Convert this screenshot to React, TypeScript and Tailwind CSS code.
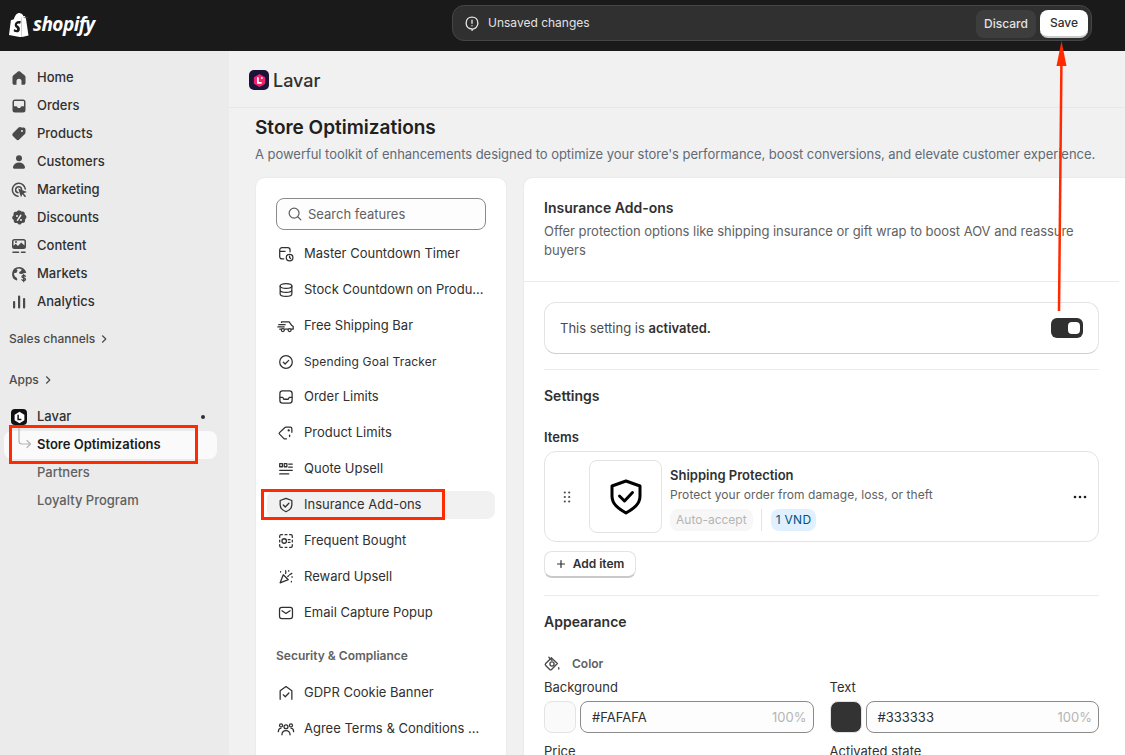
import React from "react";

const Svg = ({ children, className = "w-5 h-5" }: { children: React.ReactNode; className?: string }) => (
  <svg viewBox="0 0 20 20" className={className} fill="none" stroke="currentColor" strokeWidth="1.5" strokeLinecap="round" strokeLinejoin="round">
    {children}
  </svg>
);

const HomeIcon = () => (
  <Svg>
    <path stroke="none" fill="currentColor" d="M10 3.2c-.4 0-.7.1-1 .4L4.2 7.4c-.5.4-.7.9-.7 1.5V15c0 1 .8 1.8 1.8 1.8h2.2v-3.6a2.5 2.5 0 0 1 5 0v3.6h2.2c1 0 1.8-.8 1.8-1.8V8.9c0-.6-.2-1.1-.7-1.5L11 3.6c-.3-.3-.6-.4-1-.4Z" />
  </Svg>
);
const OrdersIcon = () => (
  <Svg>
    <path stroke="none" fill="currentColor" fillRule="evenodd" d="M6 3.5h8A2.5 2.5 0 0 1 16.5 6v8a2.5 2.5 0 0 1-2.5 2.5H6A2.5 2.5 0 0 1 3.5 14V6A2.5 2.5 0 0 1 6 3.5ZM5 10.2V6c0-.6.4-1 1-1h8c.6 0 1 .4 1 1v4.2h-2.2c-.5 0-.9.3-1.1.7l-.2.5c-.1.3-.4.5-.7.5H9.2c-.3 0-.6-.2-.7-.5l-.2-.5c-.2-.4-.6-.7-1.1-.7H5Z" />
  </Svg>
);
const ProductsIcon = () => (
  <Svg>
    <path stroke="none" fill="currentColor" fillRule="evenodd" d="M11.5 3.5h3A2 2 0 0 1 16.5 5.5v3c0 .5-.2 1-.6 1.4l-5.7 5.7c-.8.8-2 .8-2.8 0l-3.5-3.5c-.8-.8-.8-2 0-2.8l5.7-5.7c.4-.4.9-.6 1.4-.6h1ZM13 8a1 1 0 1 0 0-2 1 1 0 0 0 0 2Z" />
  </Svg>
);
const CustomersIcon = () => (
  <Svg>
    <circle cx="10" cy="6.2" r="3" fill="currentColor" stroke="none" />
    <path stroke="none" fill="currentColor" d="M10 10.5c-3.2 0-5.5 1.900-6 4.400-.2 1 .6 1.800 1.500 1.800h9c.9 0 1.700-.8 1.500-1.800-.5-2.500-2.800-4.400-6-4.400Z" />
  </Svg>
);
const MarketingIcon = () => (
  <Svg>
    <path d="M9 16.3a6.500 6.500 0 1 1 7.300-7.300" />
    <path d="M9 12.7a3 3 0 1 1 3.600-3.400" />
    <path stroke="none" fill="currentColor" d="M9.200 8.600 18 12l-3.500 1.300 2.600 3-1.200 1-2.500-3-1.400 2.900Z" />
  </Svg>
);
const DiscountsIcon = () => (
  <Svg>
    <path stroke="none" fill="currentColor" fillRule="evenodd" d="M8.600 2.700c.8-.7 2-.7 2.800 0l1 .9 1.300-.1c1.100 0 2 .8 2.100 1.900l.1 1.300 1 .9c.7.800.7 2 0 2.800l-.9 1 .1 1.300c0 1.100-.8 2-1.900 2.100l-1.300.1-.9 1c-.8.700-2 .700-2.800 0l-1-.9-1.300.1c-1.100 0-2-.8-2.100-1.900l-.1-1.300-1-.9c-.7-.8-.7-2 0-2.800l.9-1-.1-1.300c0-1.100.8-2 1.900-2.100l1.300-.1.900-1Zm3.600 4.100a.8.8 0 0 0-1.100 0l-3.300 5.100a.8.8 0 0 0 1.300.9l3.300-5.100a.8.8 0 0 0-.2-.9ZM8 8.900a1 1 0 1 0 0-2 1 1 0 0 0 0 2Zm4 4.200a1 1 0 1 0 0-2 1 1 0 0 0 0 2Z" />
  </Svg>
);
const ContentIcon = () => (
  <Svg>
    <path stroke="none" fill="currentColor" fillRule="evenodd" d="M5.500 3h9A2.500 2.500 0 0 1 17 5.500v5a2.500 2.500 0 0 1-2.500 2.500h-9A2.500 2.500 0 0 1 3 10.500v-5A2.500 2.500 0 0 1 5.500 3Zm-1 6.800 2.200-2 2.300 2.200 3.200-3.500 3.300 3V5.500c0-.6-.4-1-1-1h-9c-.6 0-1 .4-1 1v4.300ZM7 7a1 1 0 1 0 0-2 1 1 0 0 0 0 2Z" />
    <path d="M4 16.3h5.500M12.500 16.3H16" />
  </Svg>
);
const MarketsIcon = () => (
  <Svg>
    <path stroke="none" fill="currentColor" d="M10 3a7 7 0 0 0-2.500 13.500l.8-.4-.4-2.100-2.200-1.700-.9-3 2.700-.6 1.100-2.200L7.400 5 10 4.500l2.500.8-.4 1.700-2 1 .4 1.700 2.700.3c1.100-1 2.600-1.100 4-.7A7 7 0 0 0 10 3Z" />
    <path strokeWidth="1.3" d="M16.300 12.300c-.3-.6-.9-.9-1.600-.9-.9 0-1.700.5-1.700 1.300 0 1.700 3.500.8 3.500 2.600 0 .8-.8 1.300-1.800 1.300-.7 0-1.400-.3-1.700-.9M14.700 10.500v7.200" />
  </Svg>
);
const AnalyticsIcon = () => (
  <Svg>
    <path stroke="none" fill="currentColor" d="M9 4.500a1 1 0 0 1 1-1h.2a1 1 0 0 1 1 1V15.500a1 1 0 0 1-1 1H10a1 1 0 0 1-1-1ZM14 7a1 1 0 0 1 1-1h.2a1 1 0 0 1 1 1v8.500a1 1 0 0 1-1 1H15a1 1 0 0 1-1-1ZM4 10a1 1 0 0 1 1-1h.2a1 1 0 0 1 1 1v5.500a1 1 0 0 1-1 1H5a1 1 0 0 1-1-1Z" />
  </Svg>
);

const sideItems = [
  { label: "Home", Icon: HomeIcon },
  { label: "Orders", Icon: OrdersIcon },
  { label: "Products", Icon: ProductsIcon },
  { label: "Customers", Icon: CustomersIcon },
  { label: "Marketing", Icon: MarketingIcon },
  { label: "Discounts", Icon: DiscountsIcon },
  { label: "Content", Icon: ContentIcon },
  { label: "Markets", Icon: MarketsIcon },
  { label: "Analytics", Icon: AnalyticsIcon },
];

const Chevron = () => (
  <svg viewBox="0 0 10 10" className="w-[10px] h-[10px] text-[#4a4a4a]" fill="none" stroke="currentColor" strokeWidth="1.2" strokeLinecap="round" strokeLinejoin="round">
    <path d="M3.500 1.800 6.800 5 3.500 8.200" />
  </svg>
);

// small line icons for the feature list
const F = ({ children }: { children: React.ReactNode }) => (
  <svg viewBox="0 0 20 20" className="w-[18px] h-[18px] shrink-0" fill="none" stroke="currentColor" strokeWidth="1.4" strokeLinecap="round" strokeLinejoin="round">
    {children}
  </svg>
);

const features: { label: string; icon: React.ReactNode; wide?: boolean; active?: boolean }[] = [
  {
    label: "Master Countdown Timer",
    icon: (
      <F>
        <path d="M7.500 15.500H5.500A2.500 2.500 0 0 1 3 13V5.500A2.500 2.500 0 0 1 5.500 3H12a2.500 2.500 0 0 1 2.500 2.500v2M3 7h6" />
        <circle cx="14" cy="14" r="3.700" />
        <path d="M14 12.300V14l1 1" />
      </F>
    ),
  },
  {
    label: "Stock Countdown on Produ...",
    icon: (
      <F>
        <ellipse cx="10" cy="5.500" rx="6.500" ry="2.700" />
        <path d="M3.500 5.500v9c0 1.500 2.900 2.700 6.500 2.700s6.500-1.200 6.500-2.700v-9M3.500 10c0 1.500 2.900 2.700 6.500 2.700s6.500-1.200 6.500-2.700" />
      </F>
    ),
  },
  {
    label: "Free Shipping Bar",
    icon: (
      <F>
        <path d="M5 6V5.500h8.500l3 4 1.500 1v3h-2M2 8.500h7M1 11h7M3 13.500h1.500M8.500 13.500h3.500" />
        <circle cx="6.500" cy="14.500" r="1.700" />
        <circle cx="14" cy="14.500" r="1.700" />
      </F>
    ),
  },
  {
    label: "Spending Goal Tracker",
    wide: true,
    icon: (
      <F>
        <circle cx="10" cy="10" r="7" />
        <path d="m7 10.300 2 1.900 4-4" />
      </F>
    ),
  },
  {
    label: "Order Limits",
    icon: (
      <F>
        <rect x="3.200" y="3.200" width="13.600" height="13.600" rx="3" />
        <path d="M3.500 10.500h3l1 2h5l1-2h3" />
      </F>
    ),
  },
  {
    label: "Product Limits",
    icon: (
      <F>
        <path d="M8 16.500 2.800 11.300c-.5-.5-.5-1.200 0-1.700L8.500 4.200c.4-.4.800-.6 1.300-.6h5c1 0 1.700.7 1.700 1.700v4M10.500 16.500H8" />
        <path d="M14 12.500v1.500" />
        <circle cx="13" cy="7" r=".6" fill="currentColor" />
      </F>
    ),
  },
  {
    label: "Quote Upsell",
    icon: (
      <F>
        <path d="M3 4h3v3.500H3zM8 4h3v3.500H8zM13 4.500h4M13 8h4M3 11.500h14M3 15.500h10" />
      </F>
    ),
  },
  {
    label: "Insurance Add-ons",
    active: true,
    icon: (
      <F>
        <path d="M10 2.700 16.500 5v5c0 3.800-2.800 6-6.500 7.500C6.300 16 3.500 13.800 3.500 10V5Z" />
        <path d="m7 10 2.200 2.200L13.200 8" />
      </F>
    ),
  },
  {
    label: "Frequent Bought",
    icon: (
      <F>
        <path d="M3 6V4.500C3 3.700 3.700 3 4.500 3H6M14 3h1.500c.8 0 1.500.7 1.500 1.500V6M17 14v1.500c0 .8-.7 1.500-1.500 1.500H14M6 17H4.500C3.700 17 3 16.300 3 15.500V14M3 9v2M9 3h2M9 17h2M17 9v2" />
        <circle cx="8" cy="10" r="2.500" />
        <path d="M12.500 8.500h2M12.500 11.500h2" />
      </F>
    ),
  },
  {
    label: "Reward Upsell",
    icon: (
      <F>
        <path d="m7 7.500 5.500 5.500-9 3.500Z" />
        <path d="M9.500 3c.5 1 .5 2 0 3M13 3v.5M16.500 6 14 7.500M17 10h-.5M16 15v.5M4 4v.5M12 9.500l1-1" />
      </F>
    ),
  },
  {
    label: "Email Capture Popup",
    icon: (
      <F>
        <rect x="2.800" y="3.800" width="14.400" height="12.400" rx="2.500" />
        <path d="m5.500 7.500 4.500 3 4.500-3" />
      </F>
    ),
  },
];

const features2: { label: string; icon: React.ReactNode }[] = [
  {
    label: "GDPR Cookie Banner",
    icon: (
      <F>
        <path d="M3.500 17V7.500L10 2.800l6.500 4.700V17" />
        <path d="m7 12 2.200 2.200L13.200 10" />
      </F>
    ),
  },
  {
    label: "Agree Terms & Conditions ...",
    icon: (
      <F>
        <circle cx="10" cy="7.500" r="2.200" />
        <circle cx="4.500" cy="6" r="1.700" />
        <circle cx="15.500" cy="6" r="1.700" />
        <path d="M5.500 16.500c0-3 2-4.800 4.500-4.800s4.500 1.800 4.500 4.800M1.500 13c0-2 1-3.800 3-4M18.500 13c0-2-1-3.800-3-4" />
      </F>
    ),
  },
];

const Feature = ({ label, icon, wide, active }: { label: string; icon: React.ReactNode; wide?: boolean; active?: boolean }) => (
  <div className={`flex items-center h-7 pl-[10px] gap-[9px] rounded-lg text-[#303030] ${active ? "bg-[#f1f1f1]" : ""} ${wide ? "mb-[7px] tracking-[0.15px] text-[12px]" : "mb-2 text-[13px]"}`}>
    {icon}
    <span className="whitespace-nowrap">{label}</span>
  </div>
);

const RedBox = ({ className }: { className: string }) => (
  <div className={`absolute border-[3px] border-[#ff2a00] pointer-events-none ${className}`} />
);

export default function App() {
  return (
    <div className="relative w-[1125px] h-[755px] overflow-hidden flex flex-col bg-[#f1f1f1] text-[#303030] font-[Inter,sans-serif]">
      {/* top bar */}
      <header className="h-[51px] shrink-0 bg-[#1a1a1a] flex items-center relative">
        <div className="flex items-center pl-[9px] gap-[4px] text-white w-[452px]">
          <svg viewBox="0 0 20 24" className="w-5 h-6 -mt-[1px]">
            <path fill="#fff" d="M16.800 4.700c0-.1-.1-.2-.2-.2l-1.700-.1-1.300-1.300c-.1-.1-.4-.1-.5 0l-.7.2C12 2 11.200.5 9.800.5h-.2C9.200 0 8.700-.1 8.300-.1 5 0 3.400 4.200 2.900 6.300l-2.300.7c-.7.2-.7.2-.8.900L-2 22l12.800 2.400V4.500l.6-.2Z" transform="translate(2 0)" />
            <path fill="#fff" d="m13 24 6.500-1.400L16.900 5.200l-1.600-.1-1.400-1.400-.9.400Z" />
            <path fill="#1a1a1a" d="M10.200 8.700 9.400 11s-.7-.4-1.600-.4c-1.300 0-1.400.8-1.400 1 0 1.100 2.900 1.600 2.900 4.300 0 2.100-1.300 3.400-3.100 3.400-2.100 0-3.200-1.300-3.200-1.300l.6-1.900s1.100.9 2 .9c.6 0 .9-.5.9-.8 0-1.500-2.400-1.600-2.400-4.100 0-2.100 1.500-4.100 4.500-4.100 1.200 0 1.700.3 1.700.3Z" transform="translate(1.600 0)" />
          </svg>
          <span className="font-['Open_Sans',sans-serif] font-bold italic text-[19px] tracking-[-0.55px] leading-none -mt-[3px]">shopify</span>
        </div>
        <div className="w-[640px] h-9 -mt-[5px] flex items-center justify-between rounded-[12px] bg-[#303030] border border-[#454545] pl-[10px] pr-[3px]">
          <div className="flex items-center gap-[7px] text-[#e3e3e3] text-[12px]">
            <svg viewBox="0 0 20 20" className="w-[18px] h-[18px]" fill="none" stroke="currentColor" strokeWidth="1.5" strokeLinecap="round" strokeLinejoin="round">
              <path d="M10 16.500c-4 0-6.500-2.800-6.500-6.500S6 3.500 10 3.500s6.500 2.800 6.500 6.500-2.500 6.500-5.200 6.500L10 18Z" />
              <path d="M10 6.800v3.600M10 13v.1" />
            </svg>
            <span>Unsaved changes</span>
          </div>
          <div className="flex items-center gap-[4px] text-[12px] font-medium mt-[1px]">
            <div className="h-7 w-[60px] flex items-center justify-center rounded-lg bg-[#3d3d3d] text-[#e3e3e3]">Discard</div>
            <div className="h-7 w-[48px] flex items-center justify-center rounded-lg bg-white text-[#303030] border-b-2 border-[#c9c9c9]">Save</div>
          </div>
        </div>
      </header>

      <div className="flex flex-1 min-h-0">
        {/* sidebar */}
        <aside className="w-[229px] shrink-0 bg-[#ebebeb] pt-[13px] text-[13px] font-medium text-[#303030]">
          {sideItems.map(({ label, Icon }) => (
            <div key={label} className="flex items-center h-7 pl-[9px] gap-2 text-[#303030]">
              <span className="text-[#4a4a4a]"><Icon /></span>
              <span>{label}</span>
            </div>
          ))}
          <div className="flex items-center gap-1 h-7 pl-[9px] mt-[9px] text-[12px] text-[#4a4a4a]">
            Sales channels <Chevron />
          </div>
          <div className="flex items-center gap-1 h-7 pl-[9px] mt-[13px] text-[12px] text-[#4a4a4a]">
            Apps <Chevron />
          </div>
          <div className="flex items-center h-7 pl-[11px] mt-[9px] gap-[10px] pr-[24px]">
            <span className="w-4 h-4 rounded-[4px] bg-[#111] flex items-center justify-center">
              <svg viewBox="0 0 16 16" className="w-[13px] h-[13px]">
                <path fill="#fff" d="M8 1 14 4.500v7L8 15 2 11.500v-7Z" />
                <path fill="none" stroke="#111" strokeWidth="1.8" d="M6.300 4.500v6h4" />
              </svg>
            </span>
            <span>Lavar</span>
            <span className="ml-auto w-1 h-1 rounded-full bg-[#303030]" />
          </div>
          <div className="relative flex items-center h-7 ml-1 w-[213px] pl-[33px] rounded-lg bg-[#fafafa] font-semibold text-[#1a1a1a]">
            <svg viewBox="0 0 24 28" className="absolute left-[13px] -top-[6px] w-6 h-7 text-[#b5b5b5]" fill="none" stroke="currentColor" strokeWidth="1.2" strokeLinecap="round" strokeLinejoin="round">
              <path d="M2 1v15c0 2 1 3 3 3h8M10 15.500l3.500 3.500-3.500 3.500" />
            </svg>
            Store Optimizations
          </div>
          <div className="h-7 flex items-center pl-[37px] text-[#616161]">Partners</div>
          <div className="h-7 flex items-center pl-[37px] text-[#616161]">Loyalty Program</div>
        </aside>

        {/* main */}
        <main className="flex-1 min-w-0 flex flex-col">
          <div className="h-[57px] shrink-0 flex items-center gap-1 pl-5 pt-[2px] border-b border-[#e8e8e8]">
            <span className="w-5 h-5 rounded-[5px] bg-[#1b1438] flex items-center justify-center">
              <svg viewBox="0 0 16 16" className="w-[15px] h-[15px]">
                <path fill="#f0226b" d="M8 1 14 4.500v7L8 15 2 11.500v-7Z" />
                <path fill="none" stroke="#fff" strokeWidth="1.8" d="M6.300 4.500v6h4M10.500 4.500v1.500" />
              </svg>
            </span>
            <span className="text-[18px] font-medium text-[#303030]">Lavar</span>
          </div>

          <div className="pl-[26px] pt-[7px]">
            <h1 className="text-[19px] leading-[26px] font-semibold text-[#202020]">Store Optimizations</h1>
            <p className="mt-[3px] text-[13px] leading-[20px] text-[#616a75] tracking-[-0.04px] whitespace-nowrap">
              A powerful toolkit of enhancements designed to optimize your store's performance, boost conversions, and elevate customer experience.
            </p>
          </div>

          <div className="flex gap-4 pl-[26px] mt-[13px]">
            {/* feature list */}
            <section className="w-[252px] shrink-0 h-[600px] rounded-t-[10px] bg-white border border-[#ebebeb] px-[11px] pt-5">
              <div className="mx-[9px] h-8 flex items-center gap-1 rounded-lg border border-[#8a8a8a] bg-[#fdfdfd] pl-[10px] text-[13px] text-[#616161] mb-[10px]">
                <svg viewBox="0 0 20 20" className="w-[18px] h-[18px] -ml-[1px]" fill="none" stroke="#616161" strokeWidth="1.4" strokeLinecap="round">
                  <circle cx="9" cy="9" r="5.500" />
                  <path d="m13 13 3.500 3.500" />
                </svg>
                <span className="pt-[2px]">Search features</span>
              </div>
              {features.map((f) => (
                <Feature key={f.label} {...f} />
              ))}
              <div className="mt-5 mb-[14px] pl-[9px] text-[12px] leading-[18px] font-semibold text-[#616161]">Security &amp; Compliance</div>
              {features2.map((f) => (
                <Feature key={f.label} {...f} />
              ))}
            </section>

            {/* detail panel */}
            <section className="w-[640px] shrink-0 rounded-t-[10px] bg-white border border-[#ebebeb] relative">
              <div className="pl-5 pr-5 pt-[20px] pb-[21px] border-b border-[#ebebeb] w-[595px]">
                <h2 className="text-[14px] leading-[20px] font-semibold text-[#303030]">Insurance Add-ons</h2>
                <p className="mt-[4px] text-[13px] leading-[19px] tracking-[-0.04px] text-[#616161]">
                  Offer protection options like shipping insurance or gift wrap to boost AOV and reassure buyers
                </p>
              </div>
              <div className="w-[595px] pl-5 pr-5 pt-5">
                <div className="h-[52px] flex items-center justify-between rounded-xl border border-[#e3e3e3] border-b-[#cfcfcf] pl-[15px] pr-[15px] text-[13px] text-[#4a4a4a]">
                  <span className="pt-[2px]">This setting is <b className="font-semibold text-[#303030]">activated.</b></span>
                  <span className="w-8 h-[20px] rounded-md bg-[#303030] flex items-center justify-end pr-[3px]">
                    <span className="w-3 h-3 rounded-[4px] bg-white" />
                  </span>
                </div>
                <div className="h-px bg-[#ebebeb] mt-[15px]" />
                <h3 className="mt-[16px] text-[14px] leading-[20px] font-semibold text-[#303030]">Settings</h3>
                <div className="mt-[22px] text-[13px] leading-[18px] font-semibold text-[#303030]">Items</div>
                <div className="mt-[5px] h-[91px] flex items-center rounded-xl border border-[#e3e3e3] pl-[14px] pr-[10px]">
                  <svg viewBox="0 0 16 16" className="w-4 h-4 text-[#4a4a4a] shrink-0" fill="currentColor">
                    <circle cx="5.8" cy="3.500" r="1.100" /><circle cx="10.200" cy="3.500" r="1.100" />
                    <circle cx="5.8" cy="8" r="1.100" /><circle cx="10.200" cy="8" r="1.100" />
                    <circle cx="5.8" cy="12.500" r="1.100" /><circle cx="10.200" cy="12.500" r="1.100" />
                  </svg>
                  <div className="ml-[14px] w-[73px] h-[73px] shrink-0 rounded-lg border border-[#e3e3e3] flex items-center justify-center">
                    <svg viewBox="0 0 32 36" className="w-8 h-9" fill="none" stroke="#000" strokeWidth="3" strokeLinejoin="round" strokeLinecap="round">
                      <path d="M16 2 30 7v10c0 8-6 12.500-14 17C8 29.500 2 25 2 17V7Z" />
                      <path d="m9.500 17 5 5 8-8.500" />
                    </svg>
                  </div>
                  <div className="ml-2 flex-1 min-w-0 pt-[3px]">
                    <div className="text-[13px] leading-[18px] font-semibold text-[#303030]">Shipping Protection</div>
                    <div className="text-[12px] leading-[18px] tracking-[0.07px] text-[#616161] mt-[2px]">Protect your order from damage, loss, or theft</div>
                    <div className="mt-[5px] flex items-center text-[12px]">
                      <span className="h-[22px] px-[6px] flex items-center rounded-lg bg-[#f7f7f7] text-[#b5b5b5]">Auto-accept</span>
                      <span className="ml-2 mr-[9px] w-px h-[22px] bg-[#e3e3e3]" />
                      <span className="h-[22px] px-[5px] tracking-[0.3px] flex items-center rounded-lg bg-[#e0f0ff] text-[#00527c]">1 VND</span>
                    </div>
                  </div>
                  <svg viewBox="0 0 16 16" className="w-4 h-4 shrink-0 text-[#1a1a1a]" fill="currentColor">
                    <circle cx="3" cy="8" r="1.300" /><circle cx="8" cy="8" r="1.300" /><circle cx="13" cy="8" r="1.300" />
                  </svg>
                </div>
                <div className="mt-[9px] w-[92px] h-[27px] flex items-center justify-center gap-[7px] rounded-lg border border-[#e3e3e3] border-b-2 border-b-[#c9c9c9] text-[12px] font-semibold text-[#303030]">
                  <svg viewBox="0 0 10 10" className="w-[10px] h-[10px]" fill="none" stroke="currentColor" strokeWidth="1.2" strokeLinecap="round">
                    <path d="M5 1.500v7M1.500 5h7" />
                  </svg>
                  Add item
                </div>
                <div className="h-px bg-[#ebebeb] mt-[17px]" />
                <h3 className="mt-[16px] text-[14px] leading-[20px] font-semibold text-[#303030]">Appearance</h3>
                <div className="mt-[22px] flex items-center gap-[11px] text-[12px] font-semibold text-[#616161] h-5">
                  <svg viewBox="0 0 20 20" className="w-[18px] h-[18px] -ml-[1px] text-[#4a4a4a]" fill="none" stroke="currentColor" strokeWidth="1.5" strokeLinecap="round" strokeLinejoin="round">
                    <path d="M9.500 3 3 9.500c-.6.600-.6 1.500 0 2.100L7.400 16c.6.600 1.500.6 2.100 0l6.500-6.500L10 4" />
                    <circle cx="10" cy="10" r="2.300" />
                    <path d="M6.500 2.500 10 6M17.500 14v1.500" />
                  </svg>
                  Color
                </div>
                <div className="mt-1 grid grid-cols-2 gap-x-4 text-[13px] text-[#303030]">
                  <ColorField label="Background" hex="#FAFAFA" swatch="bg-[#fafafa]" />
                  <ColorField label="Text" hex="#333333" swatch="bg-[#333333]" />
                  <div className="mt-[9px] leading-[18px]">Price</div>
                  <div className="mt-[9px] leading-[18px]">Activated state</div>
                </div>
              </div>
              <div className="absolute right-0 top-[52px] bottom-0 w-[6px] bg-[#fafafa]" />
            </section>
          </div>
        </main>
      </div>

      {/* annotations */}
      <RedBox className="left-[9px] top-[425px] w-[189px] h-[39px]" />
      <RedBox className="left-[261px] top-[489px] w-[184px] h-[31px]" />
      <svg className="absolute left-[1050px] top-[40px] w-6 h-[280px] pointer-events-none" viewBox="0 0 24 280" fill="none">
        <path d="M9 271 11.500 15" stroke="#ff2a00" strokeWidth="2.5" />
        <path d="M11.500 1 6.500 26h10Z" fill="#ff2a00" />
      </svg>
    </div>
  );
}

function ColorField({ label, hex, swatch }: { label: string; hex: string; swatch: string }) {
  return (
    <div>
      <div className="leading-[18px]">{label}</div>
      <div className="mt-[5px] flex gap-1">
        <span className={`w-8 h-8 shrink-0 rounded-lg border border-[#e3e3e3] ${swatch}`} />
        <div className="flex-1 h-8 flex items-center justify-between rounded-lg border border-[#8a8a8a] bg-[#fdfdfd] pl-[11px] pr-[6px]">
          <span className="pt-[2px]">{hex}</span>
          <span className="pt-[2px] text-[#b5b5b5]">100%</span>
        </div>
      </div>
    </div>
  );
}
